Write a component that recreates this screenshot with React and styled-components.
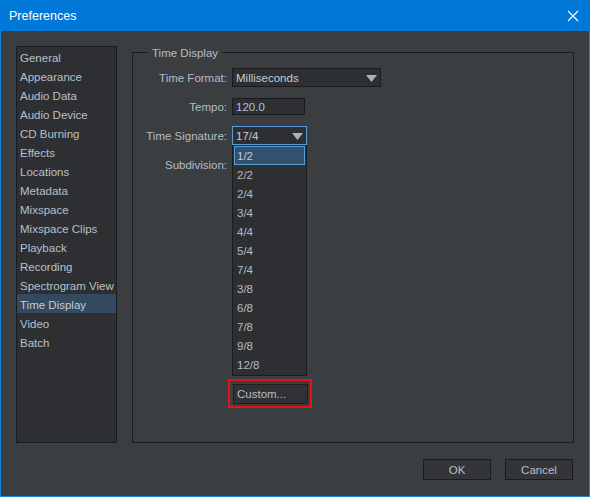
import React from "react";
import styled, { createGlobalStyle } from "styled-components";

const GlobalStyle = createGlobalStyle`
  html, body {
    margin: 0;
    padding: 0;
    background: #3b3e41;
  }
  * {
    box-sizing: border-box;
  }
`;

const Window = styled.div`
  width: 590px;
  height: 497px;
  border: 1px solid #1883d7;
  border-top: none;
  background: #3b3e41;
  display: flex;
  flex-direction: column;
  font-family: "Liberation Sans", Arial, sans-serif;
  font-size: 11.5px;
  color: #b9c2cb;
`;

const TitleBar = styled.div`
  height: 31px;
  margin: 0 -1px;
  background: #0078d7;
  display: flex;
  align-items: center;
  justify-content: space-between;
  padding: 0 11px 0 9px;
  color: #ffffff;
  font-size: 12.5px;
`;

const CloseIcon = styled.svg`
  width: 12px;
  height: 12px;
`;

const Main = styled.div`
  display: flex;
  gap: 15px;
  padding: 15px 15px 0 15px;
  height: 412px;
`;

const Sidebar = styled.div`
  width: 101px;
  height: 397px;
  background: #2e2f32;
  border: 1px solid #1b1c1e;
  display: flex;
  flex-direction: column;
`;

const NavItem = styled.div`
  height: 19px;
  line-height: 19px;
  padding: 2px 0 0 3px;
  white-space: nowrap;
  background: ${(p) => (p.$active ? "#33495f" : "transparent")};
  color: ${(p) => (p.$active ? "#c4ccd4" : "#b7c0c9")};
`;

const GroupBox = styled.div`
  position: relative;
  flex: 1;
  margin-top: 6px;
  height: 391px;
  border: 1px solid #1c1d1f;
  padding-top: 15px;
`;

const Legend = styled.span`
  position: absolute;
  top: -8px;
  left: 15px;
  padding: 0 4px;
  line-height: 16px;
  background: #3b3e41;
  color: #b4bdc6;
`;

const Form = styled.div`
  display: grid;
  grid-template-columns: 94px auto;
  grid-auto-rows: 19px;
  column-gap: 5px;
  row-gap: 10px;
  align-items: center;
`;

const Label = styled.div`
  text-align: right;
  white-space: nowrap;
  color: #b3bcc5;
  padding-top: 1px;
`;

const Field = styled.div`
  position: relative;
  display: flex;
  align-items: center;
  height: 19px;
`;

const Select = styled.div`
  width: ${(p) => p.$w}px;
  height: 19px;
  border: 1px solid ${(p) => (p.$focused ? "#5a9ad2" : "#1a1b1d")};
  background: #2e2f32;
  display: flex;
  align-items: center;
  justify-content: space-between;
  padding: 1px 3px 0 3px;
  color: #c3ccd4;
`;

const Arrow = styled.svg`
  width: 11px;
  height: 7px;
`;

const Input = styled.div`
  width: 73px;
  height: 17px;
  border: 1px solid #1a1b1d;
  background: #2e2f32;
  line-height: 16px;
  padding-left: 3px;
  color: #a9c3dc;
`;

const DropDown = styled.div`
  position: absolute;
  top: 19px;
  left: 0;
  display: flex;
  flex-direction: column;
  z-index: 5;
`;

const List = styled.div`
  width: 75px;
  border: 1px solid #1b1c1e;
  border-top: none;
  background: #2e2f32;
  padding: 1px;
`;

const Option = styled.div`
  height: 19px;
  line-height: 18px;
  padding-left: 2px;
  border: 1px solid ${(p) => (p.$active ? "#5b9bd3" : "transparent")};
  background: ${(p) => (p.$active ? "#33506d" : "transparent")};
  color: ${(p) => (p.$active ? "#b8cde2" : "#b3bcc5")};
`;

const CustomWrap = styled.div`
  position: relative;
  margin: 8px 0 0 1px;

  &::after {
    content: "";
    position: absolute;
    top: -5px;
    left: -5px;
    right: -4px;
    bottom: -4px;
    border: 2px solid #e81212;
  }
`;

const CustomButton = styled.div`
  width: 75px;
  height: 20px;
  line-height: 19px;
  padding-left: 3px;
  background: #2f3134;
  border: 1px solid #1e1f21;
  color: #b6bfc8;
`;

const Footer = styled.div`
  display: flex;
  justify-content: flex-end;
  gap: 14px;
  padding: 16px 16px 0 0;
`;

const Button = styled.div`
  width: 68px;
  height: 21px;
  border: 1px solid #1b1c1e;
  background: #333538;
  display: flex;
  align-items: center;
  justify-content: center;
  padding-top: 1px;
  color: #b6bfc8;
`;

const navItems = [
  "General",
  "Appearance",
  "Audio Data",
  "Audio Device",
  "CD Burning",
  "Effects",
  "Locations",
  "Metadata",
  "Mixspace",
  "Mixspace Clips",
  "Playback",
  "Recording",
  "Spectrogram View",
  "Time Display",
  "Video",
  "Batch",
];

const signatures = ["1/2", "2/2", "2/4", "3/4", "4/4", "5/4", "7/4", "3/8", "6/8", "7/8", "9/8", "12/8"];

const DownArrow = () => (
  <Arrow viewBox="0 0 11 7">
    <path d="M0 0 L11 0 L5.5 7 Z" fill="#a7b3bf" />
  </Arrow>
);

const App = () => {
  return (
    <>
      <GlobalStyle />
      <Window>
        <TitleBar>
          <span>Preferences</span>
          <CloseIcon viewBox="0 0 12 12">
            <path d="M1 1 L11 11 M11 1 L1 11" stroke="#ffffff" strokeWidth="1.2" />
          </CloseIcon>
        </TitleBar>
        <Main>
          <Sidebar>
            {navItems.map((item) => (
              <NavItem key={item} $active={item === "Time Display"}>
                {item}
              </NavItem>
            ))}
          </Sidebar>
          <GroupBox>
            <Legend>Time Display</Legend>
            <Form>
              <Label>Time Format:</Label>
              <Field>
                <Select $w={149}>
                  <span>Milliseconds</span>
                  <DownArrow />
                </Select>
              </Field>
              <Label>Tempo:</Label>
              <Field>
                <Input>120.0</Input>
              </Field>
              <Label>Time Signature:</Label>
              <Field>
                <Select $w={75} $focused>
                  <span>17/4</span>
                  <DownArrow />
                </Select>
                <DropDown>
                  <List>
                    {signatures.map((s, i) => (
                      <Option key={s} $active={i === 0}>
                        {s}
                      </Option>
                    ))}
                  </List>
                  <CustomWrap>
                    <CustomButton>Custom...</CustomButton>
                  </CustomWrap>
                </DropDown>
              </Field>
              <Label>Subdivision:</Label>
              <Field />
            </Form>
          </GroupBox>
        </Main>
        <Footer>
          <Button>OK</Button>
          <Button>Cancel</Button>
        </Footer>
      </Window>
    </>
  );
};

export default App;
